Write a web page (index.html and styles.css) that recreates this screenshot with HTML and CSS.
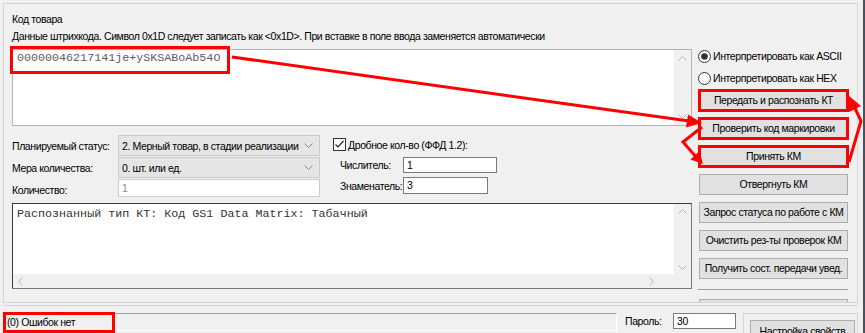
FILE: index.html
```html
<!DOCTYPE html>
<html lang="ru">
<head>
    <meta charset="UTF-8">
    <title>Код товара</title>
    <link rel="stylesheet" href="styles.css">
</head>
<body>
    <div class="window">
        <div class="frame">
            <div class="caption">Код товара</div>
            <div class="hint">Данные штрихкода. Символ 0x1D следует записать как &lt;0x1D&gt;. При вставке в поле ввода заменяется автоматически</div>

            <div class="frame-body">
                <div class="left">
                    <div class="memo code-memo">
                        <div class="memo-text">
                            <span class="code-value">00000046217141je+ySKSABoAb54O</span>
                        </div>
                        <div class="vscroll">
                            <svg width="9" height="5"><polyline points="0.5,4.5 4.5,0.5 8.5,4.5" fill="none" stroke="#b4b4b4"/></svg>
                            <svg width="9" height="5"><polyline points="0.5,0.5 4.5,4.5 8.5,0.5" fill="none" stroke="#b4b4b4"/></svg>
                        </div>
                    </div>

                    <div class="params">
                        <div class="param-grid">
                            <span>Планируемый статус:</span>
                            <div class="select">
                                <span>2. Мерный товар, в стадии реализации</span>
                                <svg width="9" height="5"><polyline points="0.5,0.5 4.5,4.5 8.5,0.5" fill="none" stroke="#8a8a8a"/></svg>
                            </div>
                            <span>Мера количества:</span>
                            <div class="select">
                                <span>0. шт. или ед.</span>
                                <svg width="9" height="5"><polyline points="0.5,0.5 4.5,4.5 8.5,0.5" fill="none" stroke="#8a8a8a"/></svg>
                            </div>
                            <span>Количество:</span>
                            <div class="field disabled">1</div>
                        </div>

                        <div class="fraction">
                            <div class="check-row">
                                <svg width="13" height="13"><rect x="0.5" y="0.5" width="12" height="12" fill="#fff" stroke="#333"/><polyline points="2.5,6.5 5,9 10.5,3" fill="none" stroke="#222" stroke-width="1.2"/></svg>
                                <span>Дробное кол-во (ФФД 1.2):</span>
                            </div>
                            <div class="frac-row num-row">
                                <span class="frac-label">Числитель:</span>
                                <div class="field num">1</div>
                            </div>
                            <div class="frac-row den-row">
                                <span class="frac-label">Знаменатель:</span>
                                <div class="field den">3</div>
                            </div>
                        </div>
                    </div>

                    <div class="memo result-memo">
                        <div class="result-text">Распознанный тип КТ: Код GS1 Data Matrix: Табачный</div>
                        <div class="vscroll">
                            <svg width="9" height="5"><polyline points="0.5,4.5 4.5,0.5 8.5,4.5" fill="none" stroke="#b4b4b4"/></svg>
                            <svg width="9" height="5"><polyline points="0.5,0.5 4.5,4.5 8.5,0.5" fill="none" stroke="#b4b4b4"/></svg>
                        </div>
                        <div class="hscroll">
                            <svg width="5" height="9"><polyline points="4.5,0.5 0.5,4.5 4.5,8.5" fill="none" stroke="#b4b4b4"/></svg>
                            <svg width="5" height="9"><polyline points="0.5,0.5 4.5,4.5 0.5,8.5" fill="none" stroke="#b4b4b4"/></svg>
                        </div>
                        <div class="corner"></div>
                    </div>
                </div>

                <div class="right">
                    <div class="radio-row">
                        <svg width="13" height="13"><circle cx="6.5" cy="6.5" r="6" fill="#fff" stroke="#333"/><circle cx="6.5" cy="6.5" r="3.3" fill="#333"/></svg>
                        <span>Интерпретировать как ASCII</span>
                    </div>
                    <div class="radio-row second">
                        <svg width="13" height="13"><circle cx="6.5" cy="6.5" r="6" fill="#fff" stroke="#333"/></svg>
                        <span>Интерпретировать как HEX</span>
                    </div>

                    <div class="buttons">
                        <div class="btn marked">Передать и распознать КТ</div>
                        <div class="btn marked">Проверить код маркировки</div>
                        <div class="btn marked">Принять КМ</div>
                        <div class="btn">Отвергнуть КМ</div>
                        <div class="btn">Запрос статуса по работе с КМ</div>
                        <div class="btn">Очистить рез-ты проверок КМ</div>
                        <div class="btn">Получить сост. передачи увед.</div>
                    </div>
                    <div class="sep"></div>
                    <div class="btn"></div>
                </div>
            </div>
        </div>

        <div class="status">
            <div class="status-panel">
                <span class="status-text">(0) Ошибок нет</span>
            </div>
            <span class="pass-label">Пароль:</span>
            <div class="field pass">30</div>
            <div class="settings-box">
                <div class="btn settings">Настройка свойств</div>
            </div>
        </div>

        <div class="edge"></div>

        <!-- red annotation arrows drawn over the form -->
        <svg class="arrows" width="865" height="333">
            <g fill="none" stroke="#f00" stroke-width="3" stroke-linejoin="miter">
                <line x1="232" y1="57" x2="689" y2="121"/>
                <polyline points="702,127 683,142 697,158"/>
                <polyline points="849,162 861,121 854,106"/>
            </g>
            <g fill="#f00">
                <polygon points="702,123 686,127.5 688,114.5"/>
                <polygon points="703,164 690.5,159.5 699.5,151"/>
                <polygon points="849,96 861,106 849,112"/>
            </g>
        </svg>
    </div>
</body>
</html>
```

FILE: styles.css
```css
* {
    box-sizing: border-box;
}

body {
    margin: 0;
    background-color: #f0f0f0;
    font-family: "Liberation Sans", Arial, sans-serif;
    font-size: 10.5px;
    letter-spacing: -0.4px;
    color: #000;
    white-space: nowrap;
}

.window {
    position: relative;
    width: 865px;
    height: 333px;
    overflow: hidden;
    padding: 3px 7px 0 3px;
}

.frame {
    height: 300px;
    border: 1px solid #d5d5d5;
    padding: 4px 9px 0 8px;
    overflow: hidden;
}

.caption {
    margin-top: 4px;
    height: 14px;
    line-height: 14px;
}

.hint {
    margin-top: 3px;
    height: 14px;
    line-height: 14px;
}

.frame-body {
    display: grid;
    grid-template-columns: 680px 150px;
    column-gap: 6px;
    margin-top: 6px;
}

/* memo boxes */
.memo {
    position: relative;
    background-color: #fff;
}

.code-memo {
    height: 77px;
    display: flex;
    border: 1px solid #b4b4b4;
}

.memo-text {
    flex: 1;
}

.code-value {
    display: inline-block;
    width: 214px;
    height: 22px;
    margin-top: -1px;
    padding-left: 4px;
    line-height: 19px;
    font-family: "Liberation Mono", "Courier New", monospace;
    font-size: 11.7px;
    letter-spacing: 0;
    color: #5c5c5c;
    outline: 3px solid #f00;
}

.vscroll {
    width: 17px;
    background-color: #f0f0f0;
    display: flex;
    flex-direction: column;
    justify-content: space-between;
    align-items: center;
    padding: 6px 0 6px;
}

.vscroll svg,
.hscroll svg {
    display: block;
}

.result-memo {
    height: 86px;
    display: grid;
    grid-template-columns: 1fr 17px;
    grid-template-rows: 1fr 14px;
    border: 1px solid #7a7a7a;
    border-top-color: #3c3c3c;
    border-left-color: #3c3c3c;
}

.result-text {
    padding: 3px 4px;
    line-height: 14px;
    font-family: "Liberation Mono", "Courier New", monospace;
    font-size: 11.7px;
    letter-spacing: 0;
    color: #333;
}

.result-memo .vscroll {
    padding: 5px 0 4px;
}

.hscroll {
    background-color: #f0f0f0;
    display: flex;
    justify-content: space-between;
    align-items: center;
    padding: 0 20px 0 5px;
}

.corner {
    background-color: #f0f0f0;
}

/* parameter fields */
.params {
    height: 77px;
    display: flex;
    padding-top: 9px;
}

.param-grid {
    display: grid;
    grid-template-columns: 106px 202px;
    grid-auto-rows: 21px;
    row-gap: 1px;
    align-items: center;
}

.select {
    height: 21px;
    display: flex;
    align-items: center;
    justify-content: space-between;
    padding: 0 6px 0 3px;
    background-color: #e5e5e5;
    border: 1px solid #cacaca;
}

.field {
    background-color: #fff;
    border: 1px solid #7a7a7a;
    padding-left: 3px;
}

.field.disabled {
    height: 18px;
    align-self: start;
    line-height: 16px;
    color: #8a8a8a;
    border-color: #cccccc;
}

.fraction {
    margin-left: 13px;
    padding-top: 3px;
}

.check-row {
    display: flex;
    align-items: center;
    gap: 2px;
    height: 13px;
}

.check-row svg {
    display: block;
}

.frac-row {
    display: flex;
    align-items: center;
    padding-left: 7px;
}

.frac-label {
    width: 63px;
}

.num-row {
    margin-top: 6px;
}

.den-row {
    margin-top: 4px;
}

.field.num {
    width: 94px;
    height: 16px;
    line-height: 14px;
}

.field.den {
    width: 85px;
    height: 17px;
    line-height: 15px;
}

/* right column */
.radio-row {
    display: flex;
    align-items: center;
    gap: 2px;
    height: 14px;
}

.radio-row svg {
    display: block;
}

.radio-row.second {
    margin-top: 8px;
}

.buttons {
    display: flex;
    flex-direction: column;
    gap: 7px;
    margin-top: 5px;
}

.btn {
    width: 149px;
    height: 21px;
    margin-left: 1px;
    border: 1px solid #adadad;
    background-color: #e1e1e1;
    text-align: center;
    line-height: 19px;
}

.btn.marked {
    outline: 3px solid #f00;
    outline-offset: -2px;
}

.sep {
    border-top: 1px solid #a0a0a0;
    margin: 10px 0 9px 0;
}

/* status line */
.status {
    display: flex;
    align-items: flex-start;
    margin-top: 2px;
    border-top: 1px solid #d5d5d5;
    padding-top: 7px;
}

.status-panel {
    width: 613px;
    height: 18px;
    margin-left: 1px;
    border: 1px solid #a0a0a0;
    border-right-color: #fff;
    border-bottom-color: #fff;
    line-height: 16px;
}

.status-text {
    display: inline-block;
    width: 108px;
    height: 17px;
    padding-left: 2px;
    outline: 3px solid #f00;
    outline-offset: -1px;
}

.pass-label {
    width: 48px;
    margin-left: 8px;
    line-height: 16px;
}

.field.pass {
    width: 63px;
    height: 16px;
    line-height: 14px;
}

.settings-box {
    width: 115px;
    height: 30px;
    margin-left: 7px;
    border: 1px solid #d5d5d5;
    padding: 6px 0 0 6px;
}

.btn.settings {
    width: 105px;
    height: 24px;
    margin-left: 0;
    line-height: 20px;
}

.edge {
    position: absolute;
    top: 0;
    right: 0;
    width: 2px;
    height: 100%;
    background-color: #46525e;
}

.arrows {
    position: absolute;
    top: 0;
    left: 0;
    pointer-events: none;
}
```
